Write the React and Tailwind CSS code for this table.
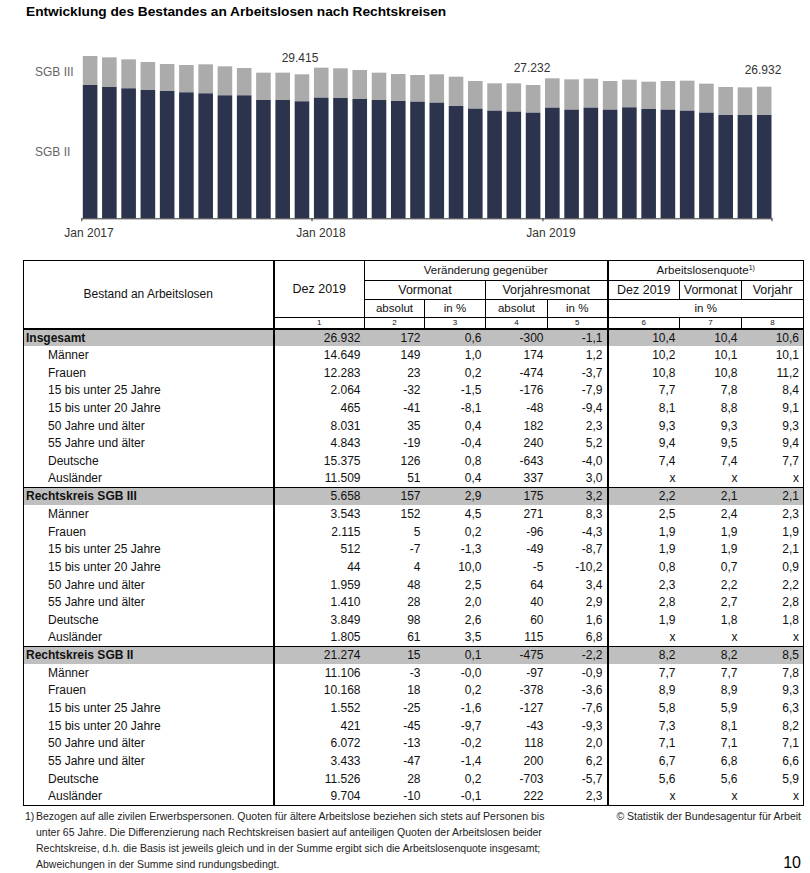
import React from "react";

const T = [48,52,58,66,72,75,73,79,84,98,98,103,83,85,90,98,102,105,103,110,123,130,130,135,115,118,116,123,119,125,123,122,131,141,142,140];
const B = [135,141,145,150,153,157,160,166,166,180,180,184,173,174,177,180,183,185,188,198,206,212,215,218,203,209,203,209,202,207,209,212,218,225,225,225];

const SUB = ["Männer","Frauen","15 bis unter 25 Jahre","15 bis unter 20 Jahre","50 Jahre und älter","55 Jahre und älter","Deutsche","Ausländer"];

const sections = [
  {
    title: "Insgesamt",
    total: ["26.932","172","0,6","-300","-1,1","10,4","10,4","10,6"],
    rows: [
      ["14.649","149","1,0","174","1,2","10,2","10,1","10,1"],
      ["12.283","23","0,2","-474","-3,7","10,8","10,8","11,2"],
      ["2.064","-32","-1,5","-176","-7,9","7,7","7,8","8,4"],
      ["465","-41","-8,1","-48","-9,4","8,1","8,8","9,1"],
      ["8.031","35","0,4","182","2,3","9,3","9,3","9,3"],
      ["4.843","-19","-0,4","240","5,2","9,4","9,5","9,4"],
      ["15.375","126","0,8","-643","-4,0","7,4","7,4","7,7"],
      ["11.509","51","0,4","337","3,0","x","x","x"],
    ],
  },
  {
    title: "Rechtskreis SGB III",
    total: ["5.658","157","2,9","175","3,2","2,2","2,1","2,1"],
    rows: [
      ["3.543","152","4,5","271","8,3","2,5","2,4","2,3"],
      ["2.115","5","0,2","-96","-4,3","1,9","1,9","1,9"],
      ["512","-7","-1,3","-49","-8,7","1,9","1,9","2,1"],
      ["44","4","10,0","-5","-10,2","0,8","0,7","0,9"],
      ["1.959","48","2,5","64","3,4","2,3","2,2","2,2"],
      ["1.410","28","2,0","40","2,9","2,8","2,7","2,8"],
      ["3.849","98","2,6","60","1,6","1,9","1,8","1,8"],
      ["1.805","61","3,5","115","6,8","x","x","x"],
    ],
  },
  {
    title: "Rechtskreis SGB II",
    total: ["21.274","15","0,1","-475","-2,2","8,2","8,2","8,5"],
    rows: [
      ["11.106","-3","-0,0","-97","-0,9","7,7","7,7","7,8"],
      ["10.168","18","0,2","-378","-3,6","8,9","8,9","9,3"],
      ["1.552","-25","-1,6","-127","-7,6","5,8","5,9","6,3"],
      ["421","-45","-9,7","-43","-9,3","7,3","8,1","8,2"],
      ["6.072","-13","-0,2","118","2,0","7,1","7,1","7,1"],
      ["3.433","-47","-1,4","200","6,2","6,7","6,8","6,6"],
      ["11.526","28","0,2","-703","-5,7","5,6","5,6","5,9"],
      ["9.704","-10","-0,1","222","2,3","x","x","x"],
    ],
  },
];

function Chart() {
  const axis = 218.3;
  return (
    <svg width="810" height="230" viewBox="0 20 810 230" className="block">
      {T.map((t, i) => {
        const x = 82.8 + i * 19.26;
        const top = 40 + t / 3;
        const bnd = 40 + B[i] / 3;
        return (
          <g key={i}>
            <rect x={x} y={top} width={14.6} height={bnd - top} fill="#ababab" />
            <rect x={x} y={bnd} width={14.6} height={axis - bnd} fill="#2c344d" />
          </g>
        );
      })}
      <line x1="81.5" y1={axis + 0.5} x2="772.5" y2={axis + 0.5} stroke="#333" strokeWidth="1" />
      {[81.8, 312, 543, 772].map((x) => (
        <line key={x} x1={x} y1={axis} x2={x} y2={axis + 3} stroke="#333" strokeWidth="1" />
      ))}
      <g fontSize="12" fill="#666">
        <text x="35" y="76">SGB III</text>
        <text x="35" y="156">SGB II</text>
      </g>
      <g fontSize="12" fill="#333" textAnchor="middle">
        <text x="300" y="62">29.415</text>
        <text x="532" y="72">27.232</text>
        <text x="763" y="74">26.932</text>
        <text x="89" y="237">Jan 2017</text>
        <text x="321" y="237">Jan 2018</text>
        <text x="551" y="237">Jan 2019</text>
      </g>
    </svg>
  );
}

function DataRow({ label, vals, head, sectionTop, last }) {
  const bb = last ? " border-b border-b-black" : "";
  const bt = sectionTop ? " border-t border-t-black" : "";
  const bg = head ? " bg-[#bfbfbf]" : "";
  return (
    <tr className="h-[17.67px]">
      <td className={"border-l border-l-black border-r-2 border-r-black whitespace-nowrap" + (head ? " font-bold pl-[2px]" : " pl-[24px]") + bb + bt + bg}>
        {label}
      </td>
      {vals.map((v, j) => (
        <td
          key={j}
          className={
            "text-right pr-[4px] whitespace-nowrap" +
            (j === 4 ? " border-r-2 border-r-black" : "") +
            (j === 7 ? " border-r border-r-black" : "") +
            bb + bt + bg
          }
        >
          {v}
        </td>
      ))}
    </tr>
  );
}

export default function App() {
  const allRows = [];
  sections.forEach((s, si) => {
    allRows.push({ label: s.title, vals: s.total, head: true, sectionTop: si > 0, key: s.title });
    s.rows.forEach((r, ri) =>
      allRows.push({ label: SUB[ri], vals: r, head: false, sectionTop: false, key: s.title + ri, last: si === 2 && ri === 7 })
    );
  });
  const th = "border border-black font-normal leading-none p-0";
  return (
    <div className="w-[810px] h-[873px] bg-white overflow-hidden font-['Liberation_Sans',Arial,sans-serif] text-[#111]">
      <div className="h-[20px] pt-[4px] pl-[26px] text-[13.7px] leading-[16px] font-bold text-black whitespace-nowrap">
        Entwicklung des Bestandes an Arbeitslosen nach Rechtskreisen
      </div>
      <Chart />
      <table className="table-fixed border-collapse ml-[23px] mt-[10px] w-[780px] text-[12px] leading-none">
        <colgroup>
          <col className="w-[250px]" />
          <col className="w-[91px]" />
          <col className="w-[60px]" />
          <col className="w-[61px]" />
          <col className="w-[62px]" />
          <col className="w-[60px]" />
          <col className="w-[72px]" />
          <col className="w-[62px]" />
          <col className="w-[62px]" />
        </colgroup>
        <thead>
          <tr className="h-[20px]">
            <th rowSpan={4} className={th + " border-r-2 border-b-2 text-[12px]"}>Bestand an Arbeitslosen</th>
            <th rowSpan={3} className={th + " text-[12.5px]"}>Dez 2019</th>
            <th colSpan={4} className={th + " border-r-2 text-[11.5px]"}>Veränderung gegenüber</th>
            <th colSpan={3} className={th + " text-[11.5px]"}>
              Arbeitslosenquote<span className="relative -top-[4px] text-[7px]">1)</span>
            </th>
          </tr>
          <tr className="h-[19px]">
            <th colSpan={2} className={th + " text-[12.5px]"}>Vormonat</th>
            <th colSpan={2} className={th + " border-r-2 text-[12.5px]"}>Vorjahresmonat</th>
            <th className={th + " text-[12.5px]"}>Dez 2019</th>
            <th className={th + " text-[12.5px]"}>Vormonat</th>
            <th className={th + " text-[12.5px]"}>Vorjahr</th>
          </tr>
          <tr className="h-[18px]">
            <th className={th + " text-[11.5px]"}>absolut</th>
            <th className={th + " text-[11.5px]"}>in %</th>
            <th className={th + " text-[11.5px]"}>absolut</th>
            <th className={th + " border-r-2 text-[11.5px]"}>in %</th>
            <th colSpan={3} className={th + " text-[11.5px]"}>in %</th>
          </tr>
          <tr className="h-[11px]">
            {[1, 2, 3, 4, 5, 6, 7, 8].map((n) => (
              <th key={n} className={th + " border-b-2 text-[8px]" + (n === 5 ? " border-r-2" : "")}>{n}</th>
            ))}
          </tr>
        </thead>
        <tbody>
          {allRows.map((r) => (
            <DataRow key={r.key} label={r.label} vals={r.vals} head={r.head} sectionTop={r.sectionTop} last={r.last} />
          ))}
        </tbody>
      </table>
      <div className="flex mt-[2px] text-[10.5px] leading-[16px] text-[#222]">
        <div className="flex pl-[25px] w-[580px]">
          <span className="w-[11px] shrink-0">1)</span>
          <div className="whitespace-nowrap">
            Bezogen auf alle zivilen Erwerbspersonen. Quoten für ältere Arbeitslose beziehen sich stets auf Personen bis
            <br />
            unter 65 Jahre. Die Differenzierung nach Rechtskreisen basiert auf anteiligen Quoten der Arbeitslosen beider
            <br />
            Rechtskreise, d.h. die Basis ist jeweils gleich und in der Summe ergibt sich die Arbeitslosenquote insgesamt;
            <br />
            Abweichungen in der Summe sind rundungsbedingt.
          </div>
        </div>
        <div className="flex-1 flex flex-col items-end justify-between pr-[9px]">
          <div className="whitespace-nowrap">© Statistik der Bundesagentur für Arbeit</div>
          <div className="text-[16px] leading-[18px] text-black">10</div>
        </div>
      </div>
    </div>
  );
}
